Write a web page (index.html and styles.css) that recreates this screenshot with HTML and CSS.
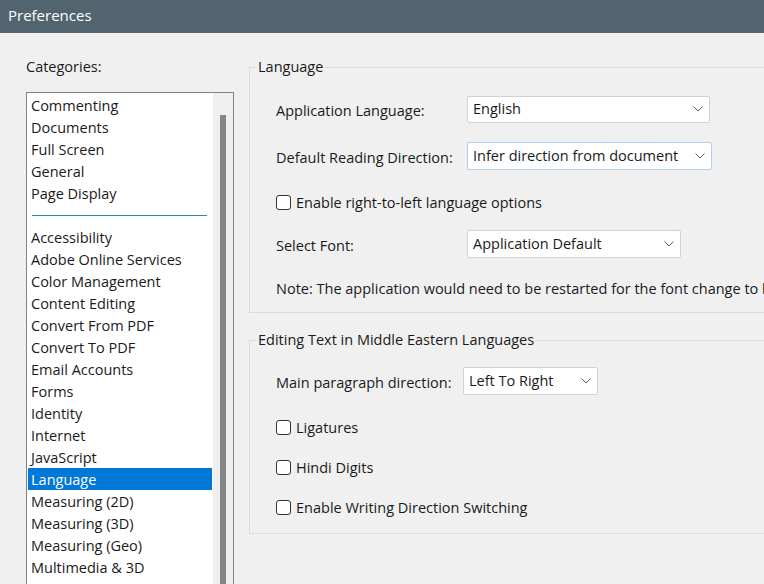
FILE: index.html
```html
<!DOCTYPE html>
<html>
<head>
<meta charset="utf-8">
<link rel="stylesheet" href="styles.css">
</head>
<body>
<div class="titlebar">Preferences</div>
<div class="main">
  <div class="left">
    <div class="cat-label">Categories:</div>
    <div class="listbox">
      <ul class="items">
        <li>Commenting</li>
        <li>Documents</li>
        <li>Full Screen</li>
        <li>General</li>
        <li>Page Display</li>
        <li class="sep"><span></span></li>
        <li>Accessibility</li>
        <li>Adobe Online Services</li>
        <li>Color Management</li>
        <li>Content Editing</li>
        <li>Convert From PDF</li>
        <li>Convert To PDF</li>
        <li>Email Accounts</li>
        <li>Forms</li>
        <li>Identity</li>
        <li>Internet</li>
        <li>JavaScript</li>
        <li class="selected">Language</li>
        <li>Measuring (2D)</li>
        <li>Measuring (3D)</li>
        <li>Measuring (Geo)</li>
        <li>Multimedia &amp; 3D</li>
      </ul>
      <div class="scrollbar"><div class="thumb"></div></div>
    </div>
  </div>
  <div class="right">
    <fieldset class="group g1">
      <legend>Language</legend>
      <div class="row r1">
        <span class="label">Application Language:</span>
        <div class="select w1"><span>English</span><svg class="chev" width="10" height="6" viewBox="0 0 10 6"><polyline points="0.5,0.5 5,5 9.5,0.5" fill="none" stroke="#606060" stroke-width="1"/></svg></div>
      </div>
      <div class="row r2">
        <span class="label">Default Reading Direction:</span>
        <div class="select w2 focus"><span>Infer direction from document</span><svg class="chev" width="10" height="6" viewBox="0 0 10 6"><polyline points="0.5,0.5 5,5 9.5,0.5" fill="none" stroke="#606060" stroke-width="1"/></svg></div>
      </div>
      <div class="check c1"><span class="box"></span><span>Enable right-to-left language options</span></div>
      <div class="row r3">
        <span class="label">Select Font:</span>
        <div class="select w3"><span>Application Default</span><svg class="chev" width="10" height="6" viewBox="0 0 10 6"><polyline points="0.5,0.5 5,5 9.5,0.5" fill="none" stroke="#606060" stroke-width="1"/></svg></div>
      </div>
      <div class="note">Note: The application would need to be restarted for the font change to be effective.</div>
    </fieldset>
    <fieldset class="group g2">
      <legend>Editing Text in Middle Eastern Languages</legend>
      <div class="row r4">
        <span class="label label2">Main paragraph direction:</span>
        <div class="select w4"><span>Left To Right</span><svg class="chev" width="10" height="6" viewBox="0 0 10 6"><polyline points="0.5,0.5 5,5 9.5,0.5" fill="none" stroke="#606060" stroke-width="1"/></svg></div>
      </div>
      <div class="check c2"><span class="box"></span><span>Ligatures</span></div>
      <div class="check c3"><span class="box"></span><span>Hindi Digits</span></div>
      <div class="check c3"><span class="box"></span><span>Enable Writing Direction Switching</span></div>
    </fieldset>
  </div>
</div>
</body>
</html>
```
FILE: styles.css
```css
html, body {
  margin: 0;
  padding: 0;
  width: 764px;
  height: 584px;
  overflow: hidden;
  background: #f0f0f0;
  font-family: "Open Sans", "Noto Sans", sans-serif;
  font-size: 14.5px;
  color: #1a1a1a;
}
.titlebar {
  height: 33px;
  background: #51646f;
  color: #ffffff;
  font-size: 15px;
  line-height: 31px;
  padding-left: 8px;
  box-sizing: border-box;
}
.main {
  display: flex;
  height: 551px;
  overflow: hidden;
}
.left {
  flex: none;
  width: 208px;
  padding-left: 26px;
  padding-top: 23px;
}
.cat-label {
  line-height: 22px;
  height: 22px;
  margin-bottom: 14px;
}
.listbox {
  display: flex;
  box-sizing: border-box;
  width: 208px;
  height: 520px;
  border: 1px solid #828282;
  background: #ffffff;
}
.items {
  list-style: none;
  margin: 0 1px 0 0;
  padding: 1px 0 0 1px;
  flex: 1;
  min-width: 0;
}
.items li {
  height: 21px;
  padding-top: 1px;
  line-height: 22px;
  padding-left: 3px;
  white-space: nowrap;
  overflow: hidden;
}
.items li.selected {
  background: #0078d7;
  color: #ffffff;
}
.items li.sep {
  display: flex;
  align-items: center;
  height: 22px;
  padding-top: 0;
  padding-left: 4px;
}
.items li.sep span {
  display: block;
  width: 175px;
  height: 1px;
  background: #2a8cab;
}
.scrollbar {
  flex: none;
  width: 20px;
  background: #efefef;
  padding-top: 22px;
  box-sizing: border-box;
}
.thumb {
  width: 6px;
  height: 520px;
  margin-left: 7px;
  background: #858585;
}
.right {
  flex: none;
  margin-left: 15px;
  padding-top: 24px;
  width: 600px;
}
.group {
  margin: 0;
  border: 1px solid #dcdcdc;
  padding: 0 0 0 26px;
  width: 560px;
}
.group legend {
  line-height: 20px;
  padding: 0 2px;
  margin-left: -20px;
}
.g1 {
  padding-top: 18px;
  padding-bottom: 13px;
}
.g2 {
  margin-top: 17px;
  padding-top: 17px;
  padding-bottom: 16px;
}
.row {
  display: flex;
  align-items: center;
  height: 28px;
}
.label {
  flex: none;
  width: 191px;
  padding-top: 3px;
}
.label2 {
  width: 187px;
}
.r2 { margin-top: 19px; }
.r3 { margin-top: 18px; }
.select {
  box-sizing: border-box;
  height: 28px;
  background: #ffffff;
  border: 1px solid #d2d2d2;
  border-radius: 2px;
  display: flex;
  align-items: center;
  justify-content: space-between;
  padding: 0 6px 0 5px;
}
.select span {
  padding-bottom: 2px;
}
.select.focus {
  border-color: #b4cfe8;
}
.w1 { width: 243px; height: 27px; }
.w2 { width: 245px; }
.w3 { width: 214px; }
.w4 { width: 135px; }
.chev { flex: none; }
.check {
  display: flex;
  align-items: center;
  height: 20px;
  gap: 5px;
}
.box {
  width: 15px;
  height: 15px;
  box-sizing: border-box;
  border: 1px solid #333333;
  border-radius: 3px;
  background: #ffffff;
}
.c1 { margin-top: 22px; }
.c2 { margin-top: 22px; }
.c3 { margin-top: 20px; }
.note {
  margin-top: 21px;
  line-height: 20px;
  white-space: nowrap;
}
```
